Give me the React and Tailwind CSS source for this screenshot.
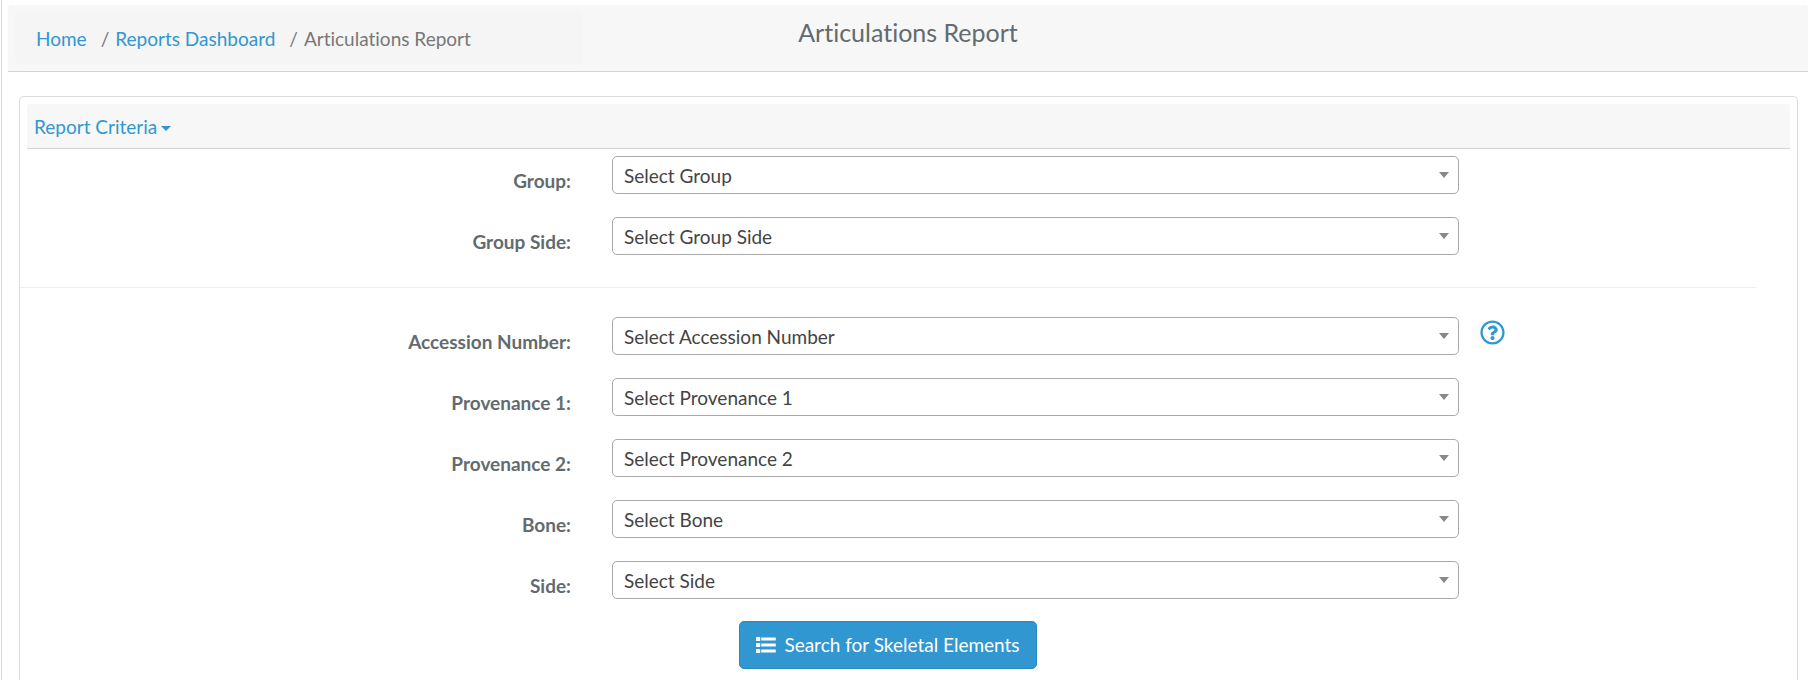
import { useId } from "react";
import { FaRegQuestionCircle } from "react-icons/fa";

const GROUP_FIELDS = [
  { label: "Group:", placeholder: "Select Group" },
  { label: "Group Side:", placeholder: "Select Group Side" },
];

const SPECIMEN_FIELDS = [
  { label: "Accession Number:", placeholder: "Select Accession Number", help: true },
  { label: "Provenance 1:", placeholder: "Select Provenance 1" },
  { label: "Provenance 2:", placeholder: "Select Provenance 2" },
  { label: "Bone:", placeholder: "Select Bone" },
  { label: "Side:", placeholder: "Select Side" },
];

function ListIcon() {
  return (
    <svg viewBox="0 0 20 16" aria-hidden="true" className="h-4 w-5 fill-current">
      {[0, 6, 12].map((y) => (
        <g key={y}>
          <rect x="0" y={y} width="4.2" height="4" rx="0.6" />
          <rect x="5.2" y={y + 0.4} width="14.6" height="3.2" rx="0.6" />
        </g>
      ))}
    </svg>
  );
}

function Field({ label, placeholder, help }) {
  const id = useId();
  return (
    <div className="grid grid-cols-[572fr_887fr_318fr]">
      <label htmlFor={id} className="pt-3 pr-[21px] text-right leading-[26px] font-bold text-[#636b6f]">
        {label}
      </label>
      <div className="grid items-center px-5">
        <select
          id={id}
          className="col-start-1 row-start-1 h-[38px] w-full appearance-none rounded-[5px] border border-[#aaa] bg-white pt-0.5 pr-8 pl-[11px] text-[#444]"
        >
          <option>{placeholder}</option>
        </select>
        <svg viewBox="0 0 10 6" aria-hidden="true" className="pointer-events-none col-start-1 row-start-1 mr-[10px] h-[6px] w-[10px] justify-self-end fill-[#888]">
          <path d="M0 0h10L5 6z" />
        </svg>
      </div>
      {help && (
        <button type="button" aria-label="Help" className="mt-[3px] ml-px self-start justify-self-start text-[25px] text-[#3097d1]">
          <FaRegQuestionCircle />
        </button>
      )}
    </div>
  );
}

export default function App() {
  return (
    <div className="ml-px min-h-screen border-l border-[#d3d9df] bg-white pt-[5px] pr-0.5 pl-1.5 font-['Lato',sans-serif] text-[19px] leading-7 text-[#636b6f] [font-variant-ligatures:none]">
      <header className="grid grid-cols-[568fr_650fr_568fr] rounded-t-[3px] border-b border-[#d3d3d3] bg-[#f7f7f7] px-[7px] py-[6px]">
        <nav aria-label="Breadcrumb" className="rounded-[5px] bg-[#f5f5f5] px-[21px] pt-[14px] pb-3">
          <ol className="flex text-[#777]">
            <li>
              <a href="#home" className="text-[#3097d1]">Home</a>
            </li>
            <li className="pl-[14px] before:pr-1.5 before:content-['/']">
              <a href="#reports" className="text-[#3097d1]">Reports Dashboard</a>
            </li>
            <li className="pl-[14px] before:pr-1.5 before:content-['/']">Articulations Report</li>
          </ol>
        </nav>
        <h1 className="pt-[7px] text-center text-[25px]">Articulations Report</h1>
      </header>

      <main className="mt-6 mr-[10px] ml-[11px] rounded-t-[5px] border border-b-0 border-[#ddd]">
        <div className="mx-[7px] mt-[7px] rounded-t-[3px] border-b border-[#d3d3d3] bg-[#f7f7f7] px-[7px] pt-[9px] pb-[7px]">
          <button type="button" className="flex items-center gap-1 text-[#3097d1]">
            Report Criteria
            <svg viewBox="0 0 10 5" aria-hidden="true" className="mt-0.5 h-[5px] w-[10px] fill-current">
              <path d="M0 0h10L5 5z" />
            </svg>
          </button>
        </div>
        <form onSubmit={(event) => event.preventDefault()}>
          <div className="flex flex-col gap-[23px] pt-[7px]">
            {GROUP_FIELDS.map((field) => (
              <Field key={field.label} {...field} />
            ))}
          </div>
          <hr className="mt-8 mr-[41px] mb-[29px] border-[#eee]" />
          <div className="flex flex-col gap-[23px]">
            {SPECIMEN_FIELDS.map((field) => (
              <Field key={field.label} {...field} />
            ))}
          </div>
          <div className="mt-[22px] mr-[41px] flex justify-center pb-[11px]">
            <button type="submit" className="flex h-12 items-center gap-2 rounded-[5px] border border-[#2a88bd] bg-[#3097d1] px-4 text-white">
              <ListIcon />
              Search for Skeletal Elements
            </button>
          </div>
        </form>
      </main>
    </div>
  );
}
